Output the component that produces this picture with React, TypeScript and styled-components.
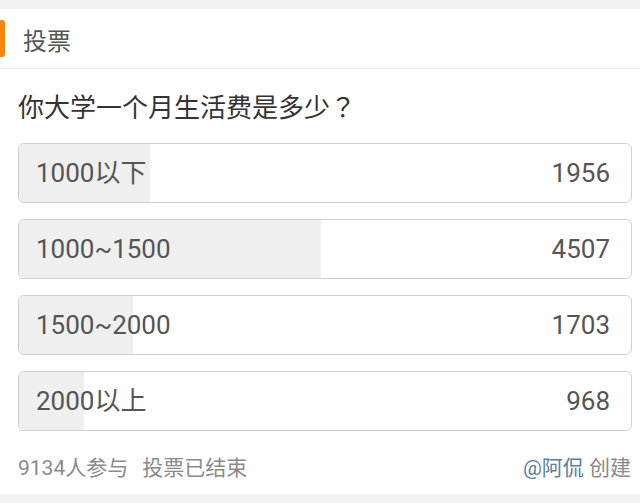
import React from "react";
import styled, { createGlobalStyle } from "styled-components";

const GlobalStyle = createGlobalStyle`
  html, body {
    margin: 0;
    padding: 0;
    background: #f2f2f2;
  }
  body {
    font-family: Roboto, "Noto Sans CJK SC", sans-serif;
  }
`;

const Card = styled.div`
  margin-top: 9px;
  width: 640px;
  height: 485px;
  background: #ffffff;
  display: flex;
  flex-direction: column;
  > * {
    flex-shrink: 0;
  }
`;

const Header = styled.div`
  display: flex;
  align-items: center;
  height: 59px;
  border-bottom: 1px solid #ececec;
  gap: 18px;
`;

const Accent = styled.span`
  width: 5px;
  height: 37px;
  background: #f7850f;
  border-radius: 0 3px 3px 0;
`;

const HeaderTitle = styled.span`
  font-family: "Noto Sans CJK SC", sans-serif;
  font-size: 24px;
  line-height: 1;
  color: #555;
  padding-top: 2px;
`;

const Body = styled.div`
  padding: 0 8px 0 18px;
  display: flex;
  flex-direction: column;
`;

const Question = styled.div`
  font-family: "Noto Sans CJK SC", sans-serif;
  font-size: 26px;
  line-height: 1;
  color: #333;
  height: 74px;
  display: flex;
  align-items: center;
`;

// full-width mark centred in its cell
const Mark = styled.span`
  font-family: "Noto Sans CJK TC", sans-serif;
`;

const Options = styled.div`
  display: flex;
  flex-direction: column;
  gap: 16px;
`;

const Option = styled.div`
  position: relative;
  height: 58px;
  border: 1px solid #cfcfcf;
  border-radius: 6px;
  overflow: hidden;
  display: flex;
  align-items: center;
  justify-content: space-between;
  padding: 0 21px 0 17px;
  font-size: 26px;
  line-height: 1;
  color: #555;
`;

const Fill = styled.div`
  position: absolute;
  left: 0;
  top: 0;
  bottom: 0;
  background: #efefef;
`;

const Label = styled.span`
  position: relative;
  line-height: 1;
`;

const Footer = styled.div`
  display: flex;
  justify-content: space-between;
  align-items: center;
  height: 74px;
  padding-right: 1px;
  font-size: 21px;
  line-height: 1;
  color: #8a8a8a;
`;

const Meta = styled.span`
  display: flex;
  gap: 14px;
`;

const Author = styled.span`
  color: #5b7ea0;
`;

const options = [
  { label: "1000以下", votes: 1956 },
  { label: "1000~1500", votes: 4507 },
  { label: "1500~2000", votes: 1703 },
  { label: "2000以上", votes: 968 },
];

const total = 9134;

export default function App() {
  return (
    <>
      <GlobalStyle />
      <Card>
        <Header>
          <Accent />
          <HeaderTitle>投票</HeaderTitle>
        </Header>
        <Body>
          <Question>
            你大学一个月生活费是多少<Mark>？</Mark>
          </Question>
          <Options>
            {options.map((o) => (
              <Option key={o.label}>
                <Fill style={{ width: `${(o.votes / total) * 100}%` }} />
                <Label>{o.label}</Label>
                <Label>{o.votes}</Label>
              </Option>
            ))}
          </Options>
          <Footer>
            <Meta>
              <span>{total}人参与</span>
              <span>投票已结束</span>
            </Meta>
            <span>
              <Author>@阿侃</Author> 创建
            </span>
          </Footer>
        </Body>
      </Card>
    </>
  );
}
